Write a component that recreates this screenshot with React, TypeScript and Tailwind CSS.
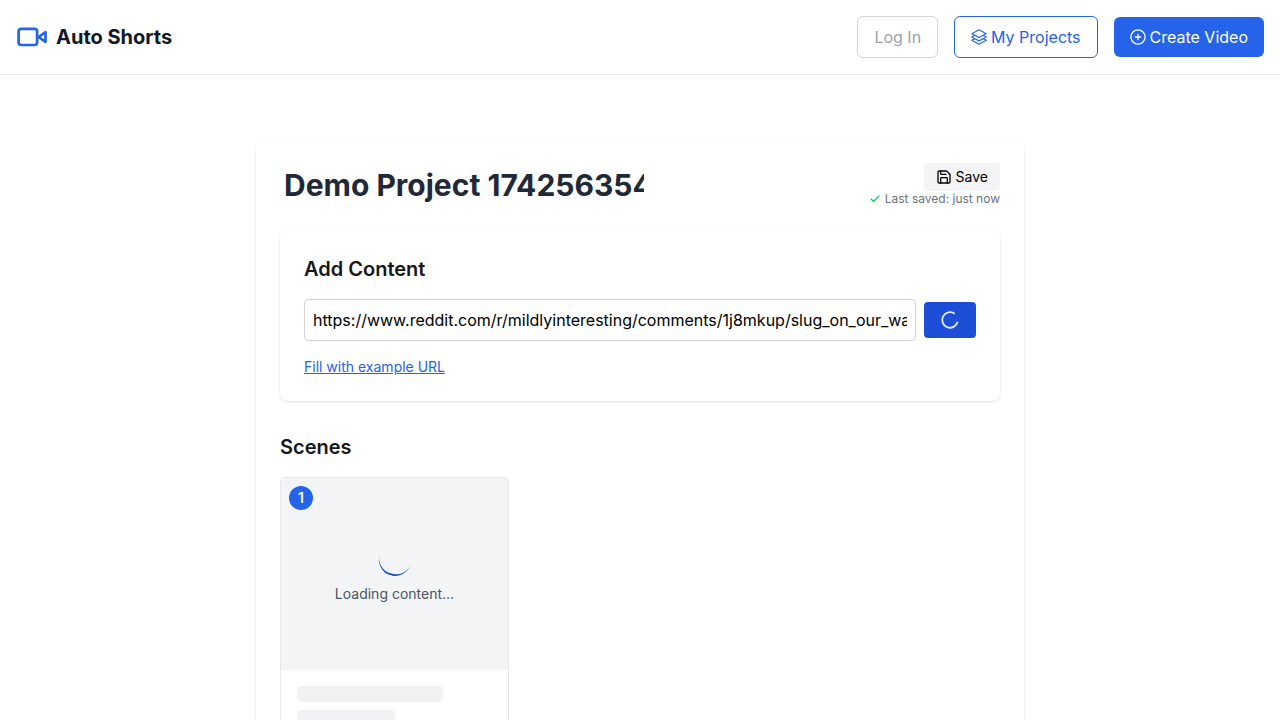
import React from "react";
import { FiCheck } from "react-icons/fi";
import { LuSave } from "react-icons/lu";

function VideoIcon() {
  return (
    <svg width="32" height="32" viewBox="0 0 32 32" fill="none" stroke="currentColor" strokeWidth="2.7" strokeLinejoin="round" className="text-[#2563eb]">
      <rect x="2.6" y="7.8" width="18.5" height="16.2" rx="2.7" />
      <path d="M22.6 16 29.5 11.2v9.6Z" />
    </svg>
  );
}

function StackIcon() {
  return (
    <svg width="16" height="16" viewBox="1.2 1.2 21.6 21.6" fill="none" stroke="currentColor" strokeWidth="1.6" strokeLinecap="round" strokeLinejoin="round">
      <path d="M6.429 9.75 2.25 12l4.179 2.25m0-4.5 5.571 3 5.571-3m-11.142 0L2.25 7.5 12 2.25l9.75 5.25-4.179 2.25m0 0L21.75 12l-4.179 2.25m0 0 4.179 2.25L12 21.75 2.25 16.5l4.179-2.25m11.142 0-5.571 3-5.571-3" />
    </svg>
  );
}

function PlusCircleIcon() {
  return (
    <svg width="16" height="16" viewBox="2 2 20 20" fill="none" stroke="currentColor" strokeWidth="1.6" strokeLinecap="round">
      <circle cx="12" cy="12" r="8.9" />
      <path d="M12 8.7v6.6M8.7 12h6.6" />
    </svg>
  );
}

function Header() {
  return (
    <header className="flex h-[75px] items-center justify-between border-b border-[#e5e7eb] px-4">
      <div className="flex items-center gap-2">
        <VideoIcon />
        <span className="text-xl font-bold text-[#111827]">Auto Shorts</span>
      </div>
      <nav className="flex items-center gap-4">
        <button className="rounded-md border border-[#d1d5db] px-4 py-2 text-[#9ca3af]">Log In</button>
        <button className="flex items-center gap-1 rounded-md border border-[#2563eb] px-4 py-2 text-[#2563eb]">
          <StackIcon />
          My Projects
        </button>
        <button className="flex items-center gap-1 rounded-md bg-[#2563eb] px-4 py-2 text-white">
          <PlusCircleIcon />
          Create Video
        </button>
      </nav>
    </header>
  );
}

export default function App() {
  return (
    <div className="h-[720px] overflow-hidden bg-white font-['Inter',sans-serif] text-[#171717]">
      <Header />
      <main className="mx-auto mt-16 h-[900px] w-[768px] rounded-lg bg-white p-6 shadow-sm">
        <div className="flex h-[68px] items-start justify-between">
          <div className="mt-1 pl-1">
            <input
              className="block h-9 w-[360px] text-[30px] leading-9 font-bold text-[#1f2937]"
              defaultValue="Demo Project 1742563542"
            />
          </div>
          <div className="flex flex-col items-end">
            <button className="flex h-7 items-center gap-1 rounded bg-[#f3f4f6] px-3 text-sm text-black">
              <LuSave size={16} />
              Save
            </button>
            <div className="flex items-center gap-1 text-xs text-[#6b7280]">
              <FiCheck size={12} strokeWidth={2.5} className="text-[#22c55e]" />
              Last saved: just now
            </div>
          </div>
        </div>
        <section className="h-[170px] rounded-lg bg-white p-6 shadow-sm">
          <h2 className="text-xl font-semibold">Add Content</h2>
          <div className="mt-4 flex items-center gap-2">
            <input
              className="h-[42px] w-[612px] rounded border border-[#d1d5db] px-2 text-base text-black"
              defaultValue="https://www.reddit.com/r/mildlyinteresting/comments/1j8mkup/slug_on_our_wall"
            />
            <button className="flex h-9 w-[52px] items-center justify-center rounded bg-[#1d4ed8] text-white">
              <svg width="20" height="20" viewBox="0 0 20 20" fill="none">
                <path d="M14.7 3.7A7.8 7.8 0 1 0 17.6 11.8" stroke="currentColor" strokeWidth="1.8" strokeOpacity="0.88" />
              </svg>
            </button>
          </div>
          <button className="mt-4 block text-sm text-[#2563eb] underline">Fill with example URL</button>
        </section>
        <h2 className="mt-8 text-xl font-semibold">Scenes</h2>
        <article className="relative mt-4 w-[229px] overflow-hidden rounded border border-[#e5e7eb] bg-white">
          <span className="absolute top-2 left-2 flex h-6 w-6 items-center justify-center rounded-full bg-[#2563eb] text-sm font-semibold text-white">
            1
          </span>
          <div className="flex h-48 flex-col items-center justify-center bg-[#f3f4f6]">
            <div className="mb-2 h-8 w-8 rotate-[16deg] rounded-full border-b-2 border-[#1d4ed8]" />
            <p className="text-sm text-[#4b5563]">Loading content...</p>
          </div>
          <div className="flex flex-col gap-2 p-4">
            <div className="h-4 w-3/4 rounded bg-[#f1f2f4]" />
            <div className="h-4 w-1/2 rounded bg-[#f1f2f4]" />
          </div>
        </article>
      </main>
    </div>
  );
}
